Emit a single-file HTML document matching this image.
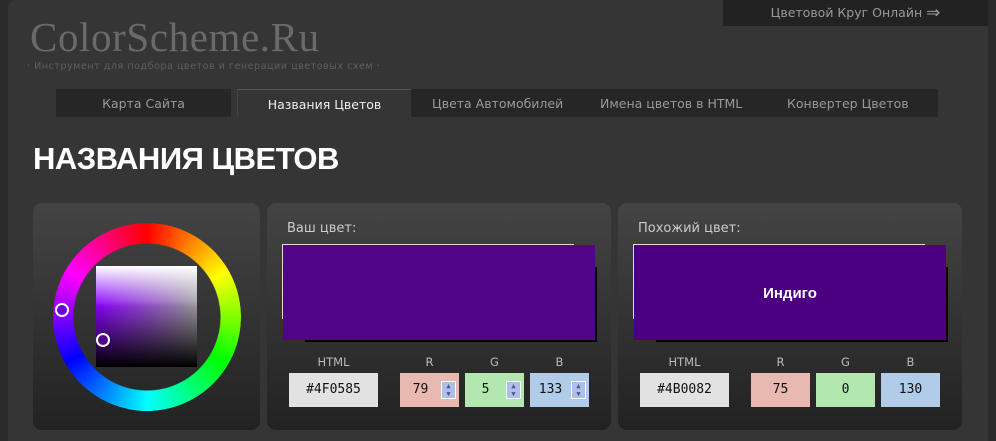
<!DOCTYPE html>
<html><head><meta charset="utf-8"><style>
*{margin:0;padding:0;box-sizing:border-box}
body{width:996px;height:441px;overflow:hidden;background:#2b2b2b;font-family:"DejaVu Sans","Liberation Sans",sans-serif;position:relative}
.a{position:absolute}
#main{left:8px;top:0;width:980px;height:441px;background:#353535;border-radius:8px 0 0 0}
.logo{left:30px;top:13px;font-family:"Liberation Serif","DejaVu Serif",serif;font-size:41px;color:#6a6a6a;letter-spacing:.6px}
.sub{left:27px;top:61px;font-size:9.6px;color:#5e5e5e;letter-spacing:.5px;white-space:nowrap}
.top{left:723px;top:0;width:265px;height:26px;background:#222;color:#9a9a9a;font-size:12.5px;text-align:center;line-height:26px}
.tab{top:89px;height:28px;background:#262626;color:#9a9a9a;font-size:12.5px;line-height:29px;text-align:center}
.act{background:#353535;color:#eee;border-top:1px solid #555;border-left:1px solid #444}
h1{left:33px;top:141px;font-family:"Liberation Sans",sans-serif;font-weight:bold;font-size:31px;color:#fff;letter-spacing:-.5px}
.p{top:203px;height:227px;border-radius:9px;background:linear-gradient(#444,#222)}
.lab{font-size:13px;color:#ccc}
.sw{width:313px;height:95px}
.sh{background:#000}
.l{font-size:11.5px;color:#bbb;text-align:center;top:355px}
.in{top:373px;height:34px;font-family:"DejaVu Sans Mono","Liberation Mono",monospace;font-size:13px;color:#111;line-height:34px;text-align:center}
.spin{position:absolute;right:3px;top:8px;width:15px;height:18px;background:#aebfe8;border:1px solid #fff;font-size:7px;line-height:8px;color:#4a5a88;text-align:center}
</style></head><body>
<div id="main" class="a"></div>
<div class="a logo">ColorScheme.Ru</div>
<div class="a sub">· Инструмент для подбора цветов и генерации цветовых схем ·</div>
<div class="a top">Цветовой Круг Онлайн <span style="font-size:17px;vertical-align:-1px">⇒</span></div>
<div class="a tab" style="left:56px;width:175px">Карта Сайта</div>
<div class="a tab act" style="left:237px;width:174px">Названия Цветов</div>
<div class="a tab" style="left:411px;width:527px;text-align:left">
<span class="a" style="left:21px">Цвета Автомобилей</span>
<span class="a" style="left:189px">Имена цветов в HTML</span>
<span class="a" style="left:376px">Конвертер Цветов</span></div>
<h1 class="a">НАЗВАНИЯ ЦВЕТОВ</h1>

<div class="a p" style="left:33px;width:227px"></div>
<div class="a" style="left:53px;top:223px;width:188px;height:188px;border-radius:50%;background:conic-gradient(from 0deg,#f00,#ff8000,#ff0,#80ff00,#0f0,#00ff80,#0ff,#0080ff,#00f,#8000ff,#f0f,#ff0080,#f00);-webkit-mask:radial-gradient(circle,transparent 73px,#000 74px);mask:radial-gradient(circle,transparent 73px,#000 74px)"></div>
<div class="a" style="left:96px;top:266px;width:101px;height:101px;background:linear-gradient(to bottom,#fff,rgba(255,255,255,0) 40%),linear-gradient(to bottom,rgba(0,0,0,0) 35%,#000),linear-gradient(to right,#8a00ff,#a0a0a0)"></div>
<div class="a" style="left:55px;top:303px;width:14px;height:14px;border:2px solid #fff;border-radius:50%;background:#6a00d0"></div>
<div class="a" style="left:96px;top:333px;width:14px;height:14px;border:2px solid #fff;border-radius:50%;background:#4f0585"></div>

<div class="a p" style="left:267px;width:344px"></div>
<div class="a lab" style="left:287px;top:221px">Ваш цвет:</div>
<div class="a" style="left:282px;top:244px;width:292px;height:75px;border-top:1px solid #ddd;border-left:1px solid #ddd"></div>
<div class="a sh" style="left:305px;top:267px;width:292px;height:75px"></div>
<div class="a sw" style="left:283px;top:245px;width:312px;background:#4f0585"></div>
<div class="a l" style="left:289px;width:89px">HTML</div>
<div class="a l" style="left:400px;width:59px">R</div>
<div class="a l" style="left:465px;width:59px">G</div>
<div class="a l" style="left:530px;width:59px">B</div>
<div class="a in" style="left:289px;width:89px;background:#e2e2e2">#4F0585</div>
<div class="a in" style="left:400px;width:59px;background:#e8b9b1;padding-right:18px">79<div class="spin">▲<br>▼</div></div>
<div class="a in" style="left:465px;width:59px;background:#b2e8b0;padding-right:18px">5<div class="spin">▲<br>▼</div></div>
<div class="a in" style="left:530px;width:59px;background:#b1cce8;padding-right:18px">133<div class="spin">▲<br>▼</div></div>

<div class="a p" style="left:618px;width:344px"></div>
<div class="a lab" style="left:638px;top:221px">Похожий цвет:</div>
<div class="a" style="left:633px;top:244px;width:292px;height:75px;border-top:1px solid #ddd;border-left:1px solid #ddd"></div>
<div class="a sh" style="left:656px;top:267px;width:292px;height:75px"></div>
<div class="a sw" style="left:634px;top:245px;width:312px;background:#4b0082;color:#fff;font-weight:bold;font-size:15px;text-align:center;line-height:98px;font-family:'Liberation Sans',sans-serif">Индиго</div>
<div class="a l" style="left:640px;width:89px">HTML</div>
<div class="a l" style="left:751px;width:59px">R</div>
<div class="a l" style="left:816px;width:59px">G</div>
<div class="a l" style="left:881px;width:59px">B</div>
<div class="a in" style="left:640px;width:89px;background:#e2e2e2">#4B0082</div>
<div class="a in" style="left:751px;width:59px;background:#e8b9b1">75</div>
<div class="a in" style="left:816px;width:59px;background:#b2e8b0">0</div>
<div class="a in" style="left:881px;width:59px;background:#b1cce8">130</div>
</body></html>
